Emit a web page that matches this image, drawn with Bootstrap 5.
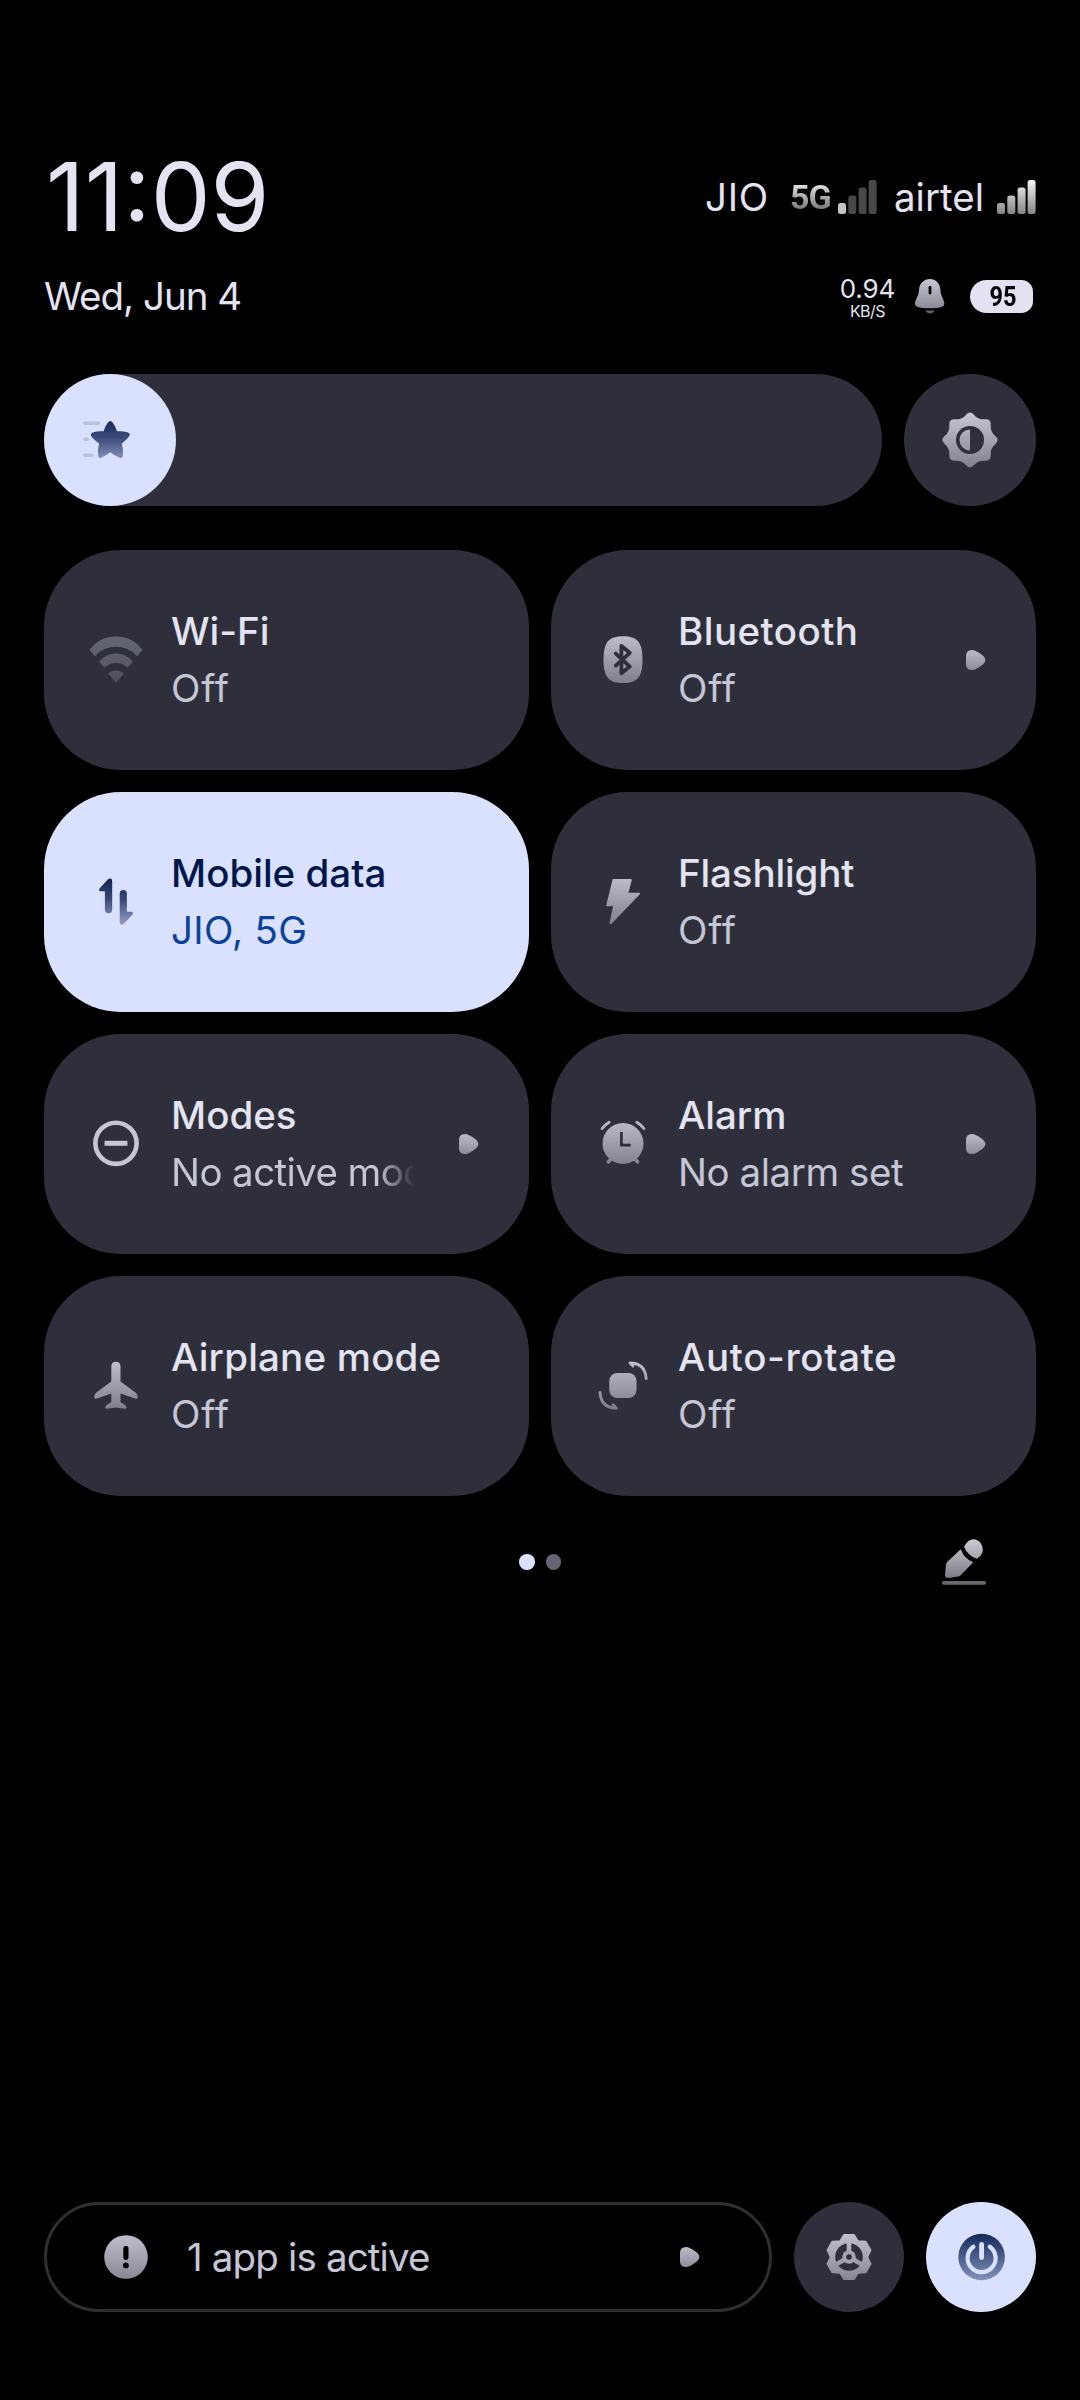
<!DOCTYPE html>
<html lang="en" data-bs-theme="dark">
<head>
<meta charset="utf-8">
<meta name="viewport" content="width=device-width, initial-scale=1">
<title>Quick settings</title>
<link href="https://cdn.jsdelivr.net/npm/bootstrap@5.3.0/dist/css/bootstrap.min.css" rel="stylesheet">
<style>
  :root { --surface: #2e2f3a; --accent: #dae1ff; --ink: #e3e3f1; --ink-dim: #c5c6d5; }
  body { background: #000; color: var(--ink); font-family: Inter, Roboto, "Liberation Sans", sans-serif; }
  .shade { width: 1080px; height: 2400px; padding: 157px 44px 88px; overflow: hidden; }
  svg { display: block; flex: none; overflow: visible; }

  /* header */
  .head-top { height: 80px; margin-bottom: 29px; }
  .head-sub { height: 60px; margin-bottom: 48px; }
  .clock { font-size: 95px; line-height: 80px; padding-left: 2px; }
  .carrier { font-size: 38.5px; line-height: 80px; }
  .carrier-jio { letter-spacing: .7px; margin-right: 21px; }
  .carrier-airtel { margin: 0 13px 0 17px; }
  .net-type { font: 700 34px/1 Roboto, sans-serif; letter-spacing: -.8px; margin-right: 7px;
    background: linear-gradient(#e4e4e6 10%, #737376 90%); -webkit-background-clip: text; background-clip: text; color: transparent; }
  .date { font-size: 38.5px; letter-spacing: -1px; padding-top: 2px; }
  .speed-box { padding-top: 3px; }
  .speed { font-size: 26px; line-height: 27px; letter-spacing: -.2px; }
  .speed-unit { font-size: 16px; line-height: 17px; letter-spacing: -.6px; padding-top: 1px; }
  .bell { margin: 0 25px 0 20px; }
  .battery { width: 63px; height: 33px; margin-right: 3px; border-radius: 17px 12px 12px 17px; background: #e2e2f2; color: #000; font: 700 28px/33px Roboto, sans-serif; padding-left: 3px; }
  .battery span { display: inline-block; transform: scaleX(.84); }

  /* brightness */
  .bright { height: 132px; gap: 22px; margin-bottom: 44px; }
  .bright-track { background: var(--surface); }
  .bright-knob, .round-lg { width: 132px; height: 132px; }
  .on { background: var(--accent); }
  .off { background: var(--surface); }

  /* tiles */
  .tiles { display: grid; grid-template-columns: 1fr 1fr; gap: 22px; }
  .tile { height: 220px; border-radius: 77px; padding: 0 51px 0 35.5px; background: var(--surface); }
  .tile .icon { width: 72px; height: 72px; margin-right: 19.5px; }
  .tile-title, .tile-sub { font-size: 38.5px; line-height: 57px; white-space: nowrap; }
  .tile-title { font-weight: 500; }
  .tile-sub { color: var(--ink-dim); letter-spacing: -.45px; }
  .tile.on { background: var(--accent); color: #00174b; }
  .tile.on .tile-sub { color: #0b429c; letter-spacing: .3px; }
  .tile .off-word { letter-spacing: .8px; }
  .tile .faded { letter-spacing: -.6px; -webkit-mask-image: linear-gradient(90deg, #000 85%, transparent); mask-image: linear-gradient(90deg, #000 85%, transparent); }
  .tile-text { width: 243px; overflow: hidden; }
  .tile-text.wide { width: 300px; }
  .chev { width: 19px; height: 20px; }

  /* pager */
  .pager { height: 72px; margin-top: 30px; }
  .dots { gap: 11px; }
  .dot { width: 15.5px; height: 15.5px; background: #646573; }
  .dot.active { background: var(--accent); }
  .pencil { margin-right: 50px; }

  /* footer */
  .foot { gap: 22px; height: 110px; }
  .apps-pill { border: 3px solid #2f2f33; padding: 0 70px 0 43px; font-size: 38.5px; letter-spacing: -.85px; color: var(--ink-dim); }
  .apps-label { padding: 2px 0 0 25px; }
  .round-md { width: 110px; height: 110px; }
</style>
</head>
<body>
<svg width="0" height="0" class="position-absolute" aria-hidden="true">
  <defs>
    <linearGradient id="gIcon" gradientUnits="userSpaceOnUse" x1="0" y1="12" x2="0" y2="60"><stop stop-color="#bcbdca"/><stop offset="1" stop-color="#7d7e89"/></linearGradient>
    <linearGradient id="gDim" gradientUnits="userSpaceOnUse" x1="0" y1="12" x2="0" y2="60"><stop stop-color="#666774"/><stop offset="1" stop-color="#4e4f5b"/></linearGradient>
    <linearGradient id="gBlue" gradientUnits="userSpaceOnUse" x1="0" y1="12" x2="0" y2="60"><stop stop-color="#10224d"/><stop offset=".45" stop-color="#3a4a78"/><stop offset="1" stop-color="#98a3c9"/></linearGradient>
    <linearGradient id="gMid" gradientUnits="userSpaceOnUse" x1="0" y1="-28" x2="0" y2="28"><stop stop-color="#c6c7d4"/><stop offset="1" stop-color="#80818c"/></linearGradient>
    <linearGradient id="gMidBlue" gradientUnits="userSpaceOnUse" x1="0" y1="-24" x2="0" y2="24"><stop stop-color="#10285a"/><stop offset="1" stop-color="#8593bd"/></linearGradient>
    <linearGradient id="gBar" gradientUnits="userSpaceOnUse" x1="0" y1="0" x2="0" y2="34"><stop stop-color="#f4f4f6"/><stop offset="1" stop-color="#858588"/></linearGradient>
    <linearGradient id="gChev" x1="0" y1="0" x2="0" y2="1"><stop stop-color="#bbbcc9"/><stop offset="1" stop-color="#8c8d98"/></linearGradient>
    <symbol id="chev" viewBox="0 0 19 20" overflow="visible"><path fill="url(#gChev)" d="M0 6Q0 0 6 0 9.5 0 15.5 4.5 19.3 7.2 19.3 10 19.3 12.8 15.5 15.5 9.5 20 6 20 0 20 0 14Z"/></symbol>
  </defs>
</svg>

<main class="shade d-flex flex-column">
  <header>
    <div class="head-top d-flex align-items-center justify-content-between">
      <div class="clock">11:09</div>
      <div class="d-flex align-items-center">
        <span class="carrier carrier-jio">JIO</span>
        <span class="net-type">5G</span>
        <svg width="39" height="34" fill="#48484b"><rect y="23" width="8" height="11" rx="2.5" fill="#c4c4c6"/><rect x="10.3" y="15.5" width="8" height="18.5" rx="2.5"/><rect x="20.6" y="7.5" width="8" height="26.5" rx="2.5"/><rect x="30.6" width="8" height="34" rx="2.5"/></svg>
        <span class="carrier carrier-airtel">airtel</span>
        <svg width="39" height="34" fill="url(#gBar)"><rect y="23" width="8" height="11" rx="2.5"/><rect x="10.3" y="15.5" width="8" height="18.5" rx="2.5"/><rect x="20.6" y="7.5" width="8" height="26.5" rx="2.5"/><rect x="30.6" width="8" height="34" rx="2.5"/></svg>
      </div>
    </div>
    <div class="head-sub d-flex align-items-center justify-content-between">
      <div class="date">Wed, Jun 4</div>
      <div class="d-flex align-items-center">
        <div class="speed-box text-center"><div class="speed">0.94</div><div class="speed-unit">KB/S</div></div>
        <svg class="bell" width="30" height="35" viewBox="0 0 30 35"><defs><linearGradient id="gBell" x1="0" y1="0" x2="0" y2="1"><stop stop-color="#c6c7d4"/><stop offset="1" stop-color="#8a8b97"/></linearGradient></defs><path fill="url(#gBell)" d="M15 0C9 0 4.5 4 4 11 3.6 18 0 20 0 25Q0 29.3 15 29.3 29.3 29.3 29.3 25C29.3 20 25.8 18 25.4 11 25 4 20.7 0 15 0Z"/><rect x="13.6" y="7" width="2.8" height="8.5" rx="1.4" fill="#000"/><path d="M10 31.6H20Q18 34.4 15 34.4T10 31.6Z" fill="#60616b"/></svg>
        <div class="battery text-center"><span>95</span></div>
      </div>
    </div>
  </header>

  <section class="bright d-flex">
    <div class="bright-track flex-grow-1 rounded-pill">
      <div class="bright-knob on rounded-circle d-flex align-items-center justify-content-center">
        <svg width="72" height="72"><g fill="#b9bfde"><rect x="9.3" y="17.6" width="17" height="3.4" rx="1.7"/><rect x="9.3" y="33.6" width="5.7" height="3.4" rx="1.7"/><rect x="9.3" y="49.6" width="10.3" height="3.4" rx="1.7"/></g><path fill="url(#gBlue)" d="M33.8 18.8Q36.3 15.2 38.8 18.8 41.5 22.5 43 27.3 49 26.8 54 28.6 57.4 30.4 54.4 33.2 52 36.2 47.8 39.8 49.6 46 48.8 52.2 48 54.9 45 53.6 40.5 51.6 36.3 48.2 32 51.6 27.6 53.6 24.6 54.9 24.2 52 23.4 46 25 39.8 20.8 36.2 18 33.2 15.3 30.4 18.6 28.6 24 26.8 29.6 27.3 31 22.5 33.8 18.8Z"/></svg>
      </div>
    </div>
    <div class="round-lg off rounded-circle d-flex align-items-center justify-content-center">
      <svg width="72" height="72" viewBox="-36 -36 72 72"><path fill="url(#gMid)" transform="scale(.97)" d="M-4.3-25.9Q0-31 4.3-25.9 8.6-20.8 15.25-21.35 21.9-21.9 21.35-15.25 20.8-8.6 25.9-4.3 31 0 25.9 4.3 20.8 8.6 21.35 15.25 21.9 21.9 15.25 21.35 8.6 20.8 4.3 25.9 0 31-4.3 25.9-8.6 20.8-15.25 21.35-21.9 21.9-21.35 15.25-20.8 8.6-25.9 4.3-31 0-25.9-4.3-20.8-8.6-21.35-15.25-21.9-21.9-15.25-21.35-8.6-20.8-4.3-25.9Z"/><circle r="14" fill="#2e2f3a"/><path fill="url(#gMid)" d="M0-10.5V10.5A10.5 10.5 0 0 1 0-10.5Z"/></svg>
    </div>
  </section>

  <section class="tiles">
    <div class="tile d-flex align-items-center">
      <svg class="icon" fill="url(#gDim)" stroke="url(#gDim)" stroke-width="1.6" stroke-linejoin="round"><path d="M10.4 26A32 32 0 0 1 61.6 26L57.2 31.2A29 29 0 0 0 14.8 31.2Z"/><path d="M20.2 37.6A20.6 20.6 0 0 1 51.8 37.6L47.5 42.6A17 17 0 0 0 24.5 42.6Z"/><path d="M29.2 49.6A11.5 11.5 0 0 1 42.8 49.6L36 57.6Z"/></svg>
      <div class="tile-text"><div class="tile-title">Wi-Fi</div><div class="tile-sub off-word">Off</div></div>
    </div>
    <div class="tile d-flex align-items-center">
      <svg class="icon"><path fill="url(#gIcon)" d="M36 12.3C50 12.3 55.5 18 55.5 35.7S50 59 36 59 16.5 53.4 16.5 35.7 22 12.3 36 12.3Z"/><path d="M28.8 29.6 42.8 42.6 34.4 49.2V22L42.8 28.8 28.8 41.6" fill="none" stroke="#2e2f3a" stroke-width="3.8" stroke-linecap="round" stroke-linejoin="round"/></svg>
      <div class="tile-text"><div class="tile-title" style="letter-spacing:.45px">Bluetooth</div><div class="tile-sub off-word">Off</div></div>
      <svg class="chev ms-auto"><use href="#chev"/></svg>
    </div>
    <div class="tile on d-flex align-items-center">
      <svg class="icon" fill="url(#gBlue)"><path d="M24.9 25.3H20.5Q18.2 24.7 19.5 22.5L27.6 13.8Q32.2 10.5 32.2 16V43.5A3.65 3.65 0 0 1 24.9 43.5Z"/><path d="M39.7 27.5A3.6 3.6 0 0 1 46.9 27.5V45.8H51.5Q53.8 46.4 52.5 48.6L44.5 57.3Q39.7 61 39.7 55Z"/></svg>
      <div class="tile-text wide"><div class="tile-title">Mobile data</div><div class="tile-sub">JIO, 5G</div></div>
    </div>
    <div class="tile d-flex align-items-center">
      <svg class="icon" fill="url(#gIcon)" stroke="url(#gIcon)" stroke-width="1.6" stroke-linejoin="round"><path d="M26.3 13.9H44L40.4 27.6H52.2L24 57.3H23.3L27 39.4H20Z"/></svg>
      <div class="tile-text"><div class="tile-title" style="letter-spacing:-.15px">Flashlight</div><div class="tile-sub off-word">Off</div></div>
    </div>
    <div class="tile d-flex align-items-center">
      <svg class="icon" fill="none" stroke="#c5c6d5"><circle cx="36" cy="35.3" r="20.6" stroke-width="4.6"/><path d="M24.6 35.3H47.4" stroke-width="5"/></svg>
      <div class="tile-text"><div class="tile-title">Modes</div><div class="tile-sub faded">No active modes</div></div>
      <svg class="chev ms-auto"><use href="#chev"/></svg>
    </div>
    <div class="tile d-flex align-items-center">
      <svg class="icon" fill="none" stroke="url(#gIcon)" stroke-linecap="round"><circle cx="36" cy="35.4" r="20.5" fill="url(#gIcon)" stroke="none"/><path stroke-width="2.8" d="M15 20.6Q18 16.6 22.2 14.2M49.8 14.2Q54 16.6 57 20.6"/><path stroke-width="3.4" d="M24 51 21.3 54M48 51 50.7 54"/><path stroke="#2e2f3a" stroke-width="2.7" stroke-linecap="butt" d="M34.4 24V37.2H43.8"/></svg>
      <div class="tile-text"><div class="tile-title">Alarm</div><div class="tile-sub">No alarm set</div></div>
      <svg class="chev ms-auto"><use href="#chev"/></svg>
    </div>
    <div class="tile d-flex align-items-center">
      <svg class="icon" fill="url(#gIcon)"><path d="M31.3 16.5Q31.3 11.7 35.9 11.7T40.5 16.5V31.5L55.8 42.8Q57.6 44.3 57.6 46.5V47.2Q57.6 49.4 55 48.6L40.5 43.6V52L45.4 55.2Q46.7 56.2 46.5 57.8 46.2 59 44.6 58.8L35.9 57.4 27.2 58.8Q25.6 59 25.3 57.8 25.1 56.2 26.4 55.2L31.3 52V43.6L16.8 48.6Q14.2 49.4 14.2 47.2V46.5Q14.2 44.3 16 42.8L31.3 31.5Z"/></svg>
      <div class="tile-text wide"><div class="tile-title" style="letter-spacing:.2px">Airplane mode</div><div class="tile-sub off-word">Off</div></div>
    </div>
    <div class="tile d-flex align-items-center">
      <svg class="icon" fill="none" stroke="url(#gIcon)" stroke-width="2.9" stroke-linecap="round" stroke-linejoin="round"><rect x="22.3" y="23" width="27.2" height="25" rx="8" fill="url(#gIcon)" stroke="none"/><path d="M46 16 43 13Q58 13 59.2 28.6M26.2 54.8 29.4 58.2Q14 58 13 42.4"/></svg>
      <div class="tile-text wide"><div class="tile-title" style="letter-spacing:.65px">Auto-rotate</div><div class="tile-sub off-word">Off</div></div>
    </div>
  </section>

  <div class="pager row gx-0 align-items-center">
    <div class="col"></div>
    <div class="col-auto d-flex dots"><span class="dot active rounded-circle"></span><span class="dot rounded-circle"></span></div>
    <div class="col d-flex justify-content-end">
      <svg class="pencil" width="44" height="72" viewBox="14 0 44 72"><defs><linearGradient id="gPen" gradientUnits="userSpaceOnUse" x1="0" y1="12" x2="0" y2="56"><stop stop-color="#cfcfd8"/><stop offset="1" stop-color="#74747c"/></linearGradient></defs><g fill="url(#gPen)"><path d="M36 20.7Q40 13.3 45.5 13.3C51 13.3 54.8 18.5 54.8 24Q54.8 29 48.8 32.7 39.5 29.5 36 20.7Z"/><path d="M32.7 23.3Q36 32.5 45.2 36.3L33 49Q32 50.2 30 50.6L20.5 52Q17 52 17 49L18 38.5Q18.2 37 19.4 35.8Z"/></g><rect x="14" y="55" width="44" height="3.7" rx="1.8" fill="#67676d"/></svg>
    </div>
  </div>

  <footer class="foot d-flex mt-auto">
    <div class="apps-pill flex-grow-1 rounded-pill d-flex align-items-center">
      <svg width="72" height="72" viewBox="-36 -36 72 72"><circle r="21.8" fill="url(#gMid)"/><rect x="-2.7" y="-11" width="5.2" height="14" rx="2.4" fill="#000"/><circle cy="8.4" cx="-.1" r="2.9" fill="#000"/></svg>
      <span class="apps-label">1 app is active</span>
      <svg class="chev ms-auto"><use href="#chev"/></svg>
    </div>
    <div class="round-md off rounded-circle d-flex align-items-center justify-content-center">
      <svg width="72" height="72" viewBox="-36 -36 72 72"><path fill="url(#gMid)" stroke="url(#gMid)" stroke-width="2.4" stroke-linejoin="round" d="M-4.8-21.8H4.8L8.6-15.6 16.6-15 21.2-6.8 18 0 21.2 6.8 16.6 15 8.6 15.6 4.8 21.8H-4.8L-8.6 15.6-16.6 15-21.2 6.8-18 0-21.2-6.8-16.6-15-8.6-15.6Z"/><circle r="13.8" fill="#2e2f3a"/><g stroke="url(#gMid)" stroke-width="4.6"><path d="M.01-15 0-5M4.3 2.5 13 7.5M-4.3 2.5-13 7.5"/></g><circle r="6.8" fill="#a3a4b1"/><circle r="2.8" fill="#2e2f3a"/></svg>
    </div>
    <div class="round-md on rounded-circle d-flex align-items-center justify-content-center">
      <svg width="72" height="72" viewBox="-36 -36 72 72" fill="none" stroke="#dae1ff" stroke-linecap="round"><circle cx=".6" r="23.3" fill="url(#gMidBlue)" stroke="none"/><path stroke-width="4.2" d="M-7.6-10.2A14 14 0 1 0 8.8-10.2"/><path stroke-width="4.8" d="M.6-12.6V.6"/></svg>
    </div>
  </footer>
</main>
<script src="https://cdn.jsdelivr.net/npm/bootstrap@5.3.0/dist/js/bootstrap.bundle.min.js"></script>
</body>
</html>
